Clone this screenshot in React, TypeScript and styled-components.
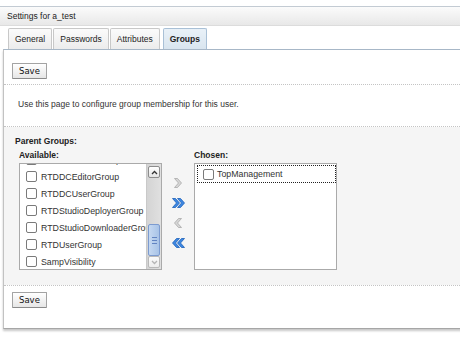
import React from 'react';
import styled, { createGlobalStyle } from 'styled-components';

const GlobalStyle = createGlobalStyle`
  html, body {
    margin: 0;
    padding: 0;
    background: #fff;
    overflow: hidden;
  }
  body {
    font-family: "Liberation Sans", Arial, sans-serif;
    font-size: 8.5px;
    color: #222;
  }
`;

const Page = styled.div`
  width: 460px;
  height: 347px;
  padding-top: 6px;
  box-sizing: border-box;
  overflow: hidden;
`;

const TitleBar = styled.div`
  height: 18px;
  display: flex;
  align-items: center;
  padding-left: 7px;
  border-top: 1px solid #c3cbd3;
  border-bottom: 1px solid #dcdcdc;
  background: linear-gradient(#fbfbfb, #e8e8e8);
`;

const TabStrip = styled.div`
  display: flex;
  gap: 1px;
  padding: 2px 0 0 8px;
`;

const Tab = styled.div<{ $active?: boolean }>`
  height: 20px;
  padding: 0 6px;
  display: flex;
  align-items: center;
  border: 1px solid ${(p) => (p.$active ? '#a9c0d6' : '#c8c8c8')};
  border-bottom: none;
  border-radius: 2px 2px 0 0;
  margin-left: ${(p) => (p.$active ? '2px' : '0')};
  background: ${(p) =>
    p.$active ? 'linear-gradient(#e9f1f8, #d9e5ef)' : 'linear-gradient(#fbfbfb, #ececec)'};
  font-weight: ${(p) => (p.$active ? 700 : 400)};
`;

const Panel = styled.div`
  width: 470px;
  margin-left: 3px;
  border-top: 1px solid #a7b7c7;
  border-left: 1px solid #c2c2c2;
  border-bottom: 1px solid #a6a6a6;
  box-shadow: 0 2px 2px rgba(0, 0, 0, 0.22);
`;

const ButtonBar = styled.div<{ $top: number; $bottom: number }>`
  padding: ${(p) => p.$top}px 8px ${(p) => p.$bottom}px;
`;

const Button = styled.button`
  height: 16px;
  padding: 0 6px;
  font-family: "DejaVu Sans", Verdana, sans-serif;
  font-size: 8.5px;
  color: #111;
  border: 1px solid #a3a3a3;
  border-bottom-color: #8a8a8a;
  border-radius: 1px;
  background: linear-gradient(#ffffff, #e6e6e6);
`;

const Separator = styled.div`
  border-top: 1px dotted #c4c4c4;
`;

const Instructions = styled.div`
  padding: 13px 14px 15px;
  line-height: 13px;
  color: #333;
`;

const GroupSection = styled.div`
  background: #f5f5f5;
  padding: 8px 0 15px 11px;
`;

const Heading = styled.div`
  font-weight: 700;
  line-height: 12px;
`;

const Picker = styled.div`
  display: flex;
  margin: 2px 0 0 4px;
`;

const Column = styled.div`
  display: flex;
  flex-direction: column;
`;

const Label = styled.div`
  font-weight: 700;
  line-height: 12px;
  margin-bottom: 2px;
`;

const ListBox = styled.div`
  width: 143px;
  height: 107px;
  box-sizing: border-box;
  border: 1px solid #aaaaaa;
  background: #fff;
  display: flex;
  overflow: hidden;
`;

const Viewport = styled.div`
  flex: 1;
  overflow: hidden;
`;

const Rows = styled.div<{ $offset: number }>`
  margin-top: ${(p) => -p.$offset}px;
`;

const Row = styled.div`
  height: 17px;
  display: flex;
  align-items: center;
  padding-left: 6px;
  gap: 4px;
  white-space: nowrap;
  font-size: 8.8px;
  color: #333;
`;

const FocusedRow = styled(Row)`
  height: 16px;
  margin: 1px 0 0 2px;
  padding-left: 5px;
  gap: 3px;
  border: 1px dotted #222;
`;

const Checkbox = styled.span`
  width: 11px;
  height: 11px;
  box-sizing: border-box;
  flex-shrink: 0;
  border: 1px solid #7a7a7a;
  border-radius: 2px;
  background: #fff;
`;

const Scrollbar = styled.div`
  width: 15px;
  flex-shrink: 0;
  box-sizing: border-box;
  display: flex;
  flex-direction: column;
  padding: 2px 1px 1px;
  border-left: 1px solid #c9c9c9;
  background: linear-gradient(90deg, #d4d4d4, #e0e0e0);
`;

const ScrollButton = styled.div<{ $disabled?: boolean }>`
  height: 12px;
  box-sizing: border-box;
  display: flex;
  align-items: center;
  justify-content: center;
  border: 1px solid ${(p) => (p.$disabled ? '#b9b9b9' : '#8c8c8c')};
  border-radius: 2px;
  background: ${(p) => (p.$disabled ? 'linear-gradient(#fafafa, #ededed)' : 'linear-gradient(#ffffff, #e4e4e4)')};
`;

const Track = styled.div`
  flex: 1;
`;

const Thumb = styled.div`
  height: 32px;
  box-sizing: border-box;
  display: flex;
  flex-direction: column;
  align-items: center;
  justify-content: center;
  gap: 2px;
  border: 1px solid #7c9bd0;
  border-radius: 2px;
  background: linear-gradient(90deg, #c6d9f1, #a8c3e7);
`;

const Grip = styled.span`
  width: 5px;
  height: 1px;
  background: #6284c2;
`;

const Movers = styled.div`
  width: 32px;
  display: flex;
  flex-direction: column;
  align-items: center;
  gap: 10px;
  padding-top: 29px;
`;

const Chevron = ({ up, color }: { up?: boolean; color: string }) => (
  <svg width="7" height="5" viewBox="0 0 7 5">
    <path
      d={up ? 'M1 4 L3.5 1.5 L6 4' : 'M1 1 L3.5 3.5 L6 1'}
      fill="none"
      stroke={color}
      strokeWidth="1.3"
    />
  </svg>
);

const Arrow = ({ dir, double, active }: { dir: 'left' | 'right'; double?: boolean; active?: boolean }) => {
  const fill = active ? '#3d88e2' : '#d6d6d6';
  const stroke = active ? '#1d5fb9' : '#a9a9a9';
  const one = 'M0.5 0.5 L3.5 0.5 L7.5 5 L3.5 9.5 L0.5 9.5 L4.5 5 Z';
  const w = double ? 13 : 8;
  return (
    <svg width={w} height="10" viewBox={`0 0 ${w} 10`}>
      <g transform={dir === 'left' ? `translate(${w} 0) scale(-1 1)` : undefined}>
        <path d={one} fill={fill} stroke={stroke} strokeWidth="0.8" strokeLinejoin="round" />
        {double && (
          <path d={one} transform="translate(5 0)" fill={fill} stroke={stroke} strokeWidth="0.8" strokeLinejoin="round" />
        )}
      </g>
    </svg>
  );
};

const available = [
  'RTDDCAdminGroup',
  'RTDDCEditorGroup',
  'RTDDCUserGroup',
  'RTDStudioDeployerGroup',
  'RTDStudioDownloaderGroup',
  'RTDUserGroup',
  'SampVisibility',
];

const App = () => (
  <Page>
    <GlobalStyle />
    <TitleBar>Settings for a_test</TitleBar>
    <TabStrip>
      <Tab>General</Tab>
      <Tab>Passwords</Tab>
      <Tab>Attributes</Tab>
      <Tab $active>Groups</Tab>
    </TabStrip>
    <Panel>
      <ButtonBar $top={13} $bottom={5}>
        <Button>Save</Button>
      </ButtonBar>
      <Separator />
      <Instructions>Use this page to configure group membership for this user.</Instructions>
      <Separator />
      <GroupSection>
        <Heading>Parent Groups:</Heading>
        <Picker>
          <Column>
            <Label>Available:</Label>
            <ListBox>
              <Viewport>
                <Rows $offset={13}>
                  {available.map((name) => (
                    <Row key={name}>
                      <Checkbox />
                      {name}
                    </Row>
                  ))}
                </Rows>
              </Viewport>
              <Scrollbar>
                <ScrollButton>
                  <Chevron up color="#333" />
                </ScrollButton>
                <Track />
                <Thumb>
                  <Grip />
                  <Grip />
                  <Grip />
                </Thumb>
                <ScrollButton $disabled>
                  <Chevron color="#b5b5b5" />
                </ScrollButton>
              </Scrollbar>
            </ListBox>
          </Column>
          <Movers>
            <Arrow dir="right" />
            <Arrow dir="right" double active />
            <Arrow dir="left" />
            <Arrow dir="left" double active />
          </Movers>
          <Column>
            <Label>Chosen:</Label>
            <ListBox>
              <Viewport>
                <FocusedRow>
                  <Checkbox />
                  TopManagement
                </FocusedRow>
              </Viewport>
            </ListBox>
          </Column>
        </Picker>
      </GroupSection>
      <Separator />
      <ButtonBar $top={6} $bottom={20}>
        <Button>Save</Button>
      </ButtonBar>
    </Panel>
  </Page>
);

export default App;
